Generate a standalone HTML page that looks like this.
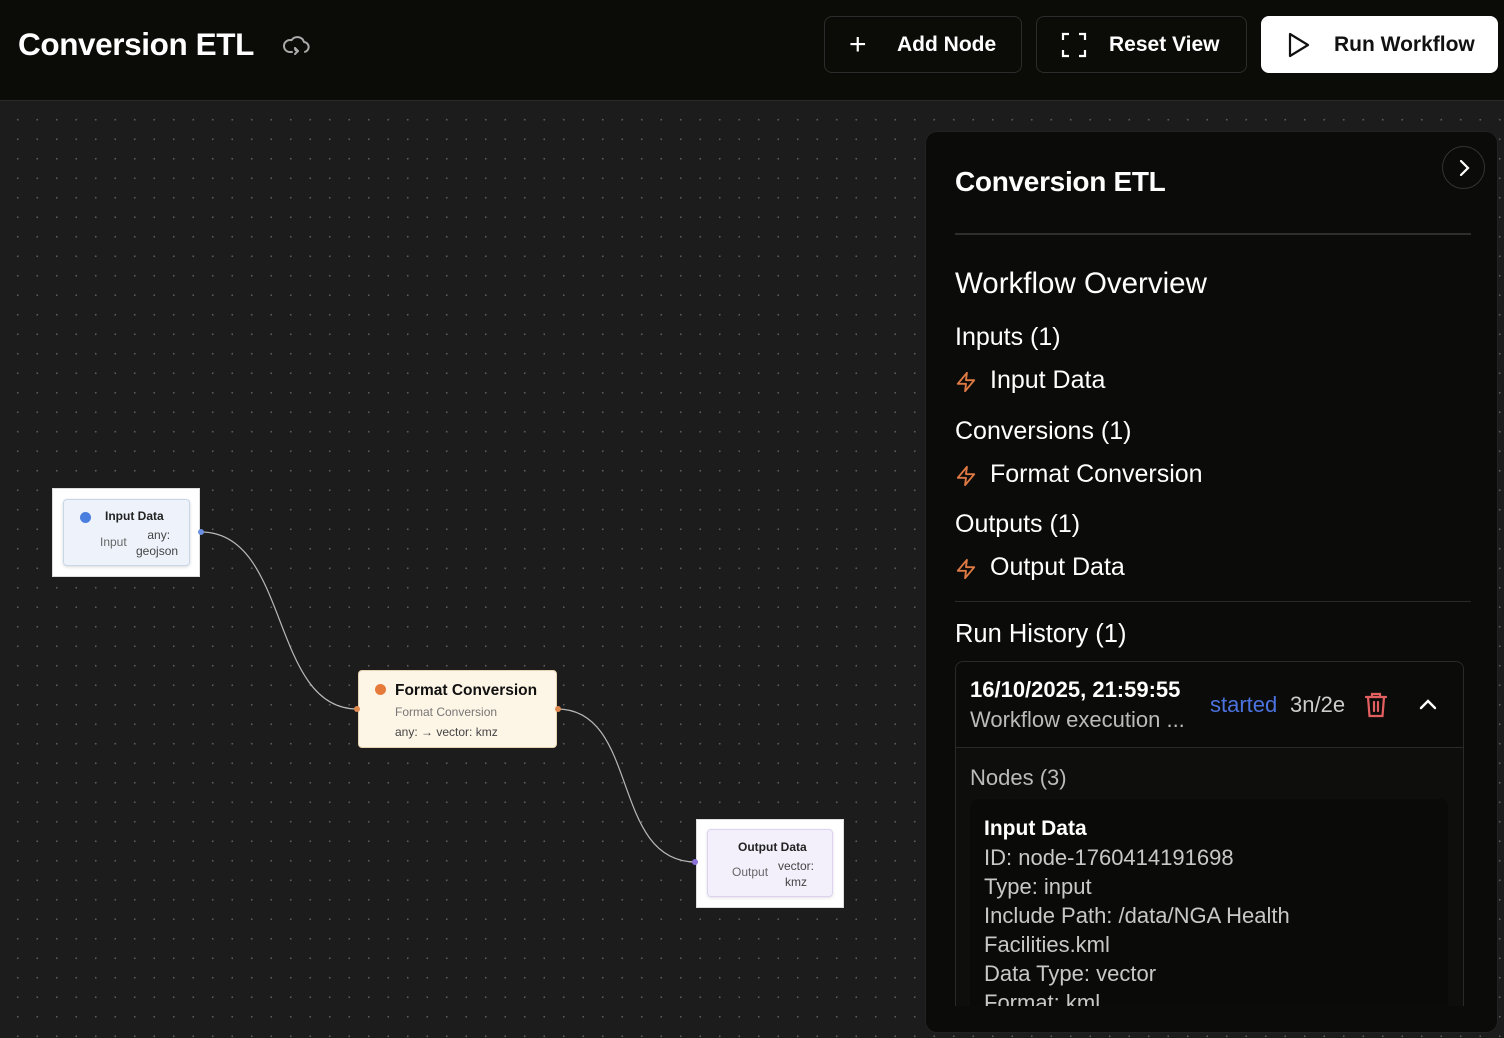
<!DOCTYPE html>
<html><head><meta charset="utf-8"><style>
*{margin:0;padding:0;box-sizing:border-box}
body{width:1504px;height:1038px;overflow:hidden;background:#1c1c1c;font-family:"Liberation Sans",sans-serif;position:relative;color:#fff}
.hdr{position:absolute;left:0;top:0;width:1504px;height:101px;background:#0b0b08;border-bottom:1px solid #2a2a2a}
.canvas{position:absolute;left:0;top:102px;width:1504px;height:936px;background-color:#1c1c1c;background-image:radial-gradient(circle,#5a5a5a 0.8px,transparent 1.1px);background-size:19.5px 19.5px;background-position:8px 8px}
.a{position:absolute;white-space:nowrap}
.btn{position:absolute;top:16px;height:57px;border:1px solid #2c2c2c;border-radius:8px;background:#0b0b08;font-size:21px;font-weight:bold;display:flex;align-items:center}
.panel{position:absolute;left:925px;top:131px;width:573px;height:902px;background:#0b0b09;border-radius:12px;border:1px solid #222;overflow:hidden}
</style></head><body>
<div class="hdr">
 <div class="a" style="left:18px;top:26px;font-size:31.5px;font-weight:bold;letter-spacing:-0.4px">Conversion ETL</div>
 <svg class="a" style="left:283px;top:33px" width="28" height="24" viewBox="0 0 28 24" fill="none" stroke="#aaa" stroke-width="2" stroke-linecap="round" stroke-linejoin="round"><path d="M9 19H7a6 6 0 1 1 1.5-11.8A7 7 0 0 1 21 9a5 5 0 0 1 1 9.8"/><path d="M12 15l3 3-3 3"/><path d="M15 18c-2 0-3-1-3-3"/></svg>
 <div class="btn" style="left:824px;width:198px"><span style="margin-left:24px;font-size:30px;font-weight:normal;width:26px">+</span><span style="margin-left:22px">Add Node</span></div>
 <div class="btn" style="left:1036px;width:211px"><svg style="margin-left:24px" width="26" height="26" viewBox="0 0 26 26" fill="none" stroke="#fff" stroke-width="2.2"><path d="M2 8V2h6M18 2h6v6M24 18v6h-6M8 24H2v-6"/></svg><span style="margin-left:22px">Reset View</span></div>
 <div class="btn" style="left:1261px;width:237px;background:#fff;color:#111;border-color:#fff"><svg style="margin-left:24px" width="26" height="28" viewBox="0 0 26 28" fill="none" stroke="#111" stroke-width="2.2" stroke-linejoin="round"><path d="M4 3l18 11-18 11z"/></svg><span style="margin-left:22px">Run Workflow</span></div>
</div>
<div class="canvas"></div>
<svg class="a" style="left:0;top:0" width="920" height="1038" fill="none" stroke="#b8b8b8" stroke-width="1.2"><path d="M201 532C290 532,270 709,357 709"/><path d="M557 709C640 709,610 862,696 862"/></svg>
<div class="a" style="left:52px;top:488px;width:148px;height:89px;background:#fff;border:1px solid #ddd"></div>
<div class="a" style="left:63px;top:499px;width:127px;height:67px;background:#eef3fb;border:1px solid #c8d6ea;border-radius:4px;box-shadow:0 1px 3px rgba(0,0,0,.15)"></div>
<div class="a" style="left:80px;top:512px;width:11px;height:11px;border-radius:50%;background:#4a7fe0"></div>
<div class="a" style="left:105px;top:509px;font-size:12px;font-weight:bold;color:#222">Input Data</div>
<div class="a" style="left:100px;top:535px;font-size:12px;color:#666">Input</div>
<div class="a" style="left:136px;top:527px;font-size:12px;color:#444;text-align:center;line-height:16px">&nbsp;any:<br>geojson</div>
<div class="a" style="left:198px;top:529px;width:6px;height:6px;border-radius:50%;background:#6b8fe0"></div>
<div class="a" style="left:358px;top:670px;width:199px;height:78px;background:#fdf5e6;border:1px solid #e8d3b0;border-radius:4px"></div>
<div class="a" style="left:375px;top:684px;width:11px;height:11px;border-radius:50%;background:#e57a3a"></div>
<div class="a" style="left:395px;top:682px;font-size:15.5px;font-weight:bold;color:#111">Format Conversion</div>
<div class="a" style="left:395px;top:705px;font-size:12px;color:#777">Format Conversion</div>
<div class="a" style="left:395px;top:725px;font-size:12px;color:#444">any: → vector: kmz</div>
<div class="a" style="left:354px;top:706px;width:6px;height:6px;border-radius:50%;background:#e08a50"></div>
<div class="a" style="left:555px;top:706px;width:6px;height:6px;border-radius:50%;background:#e08a50"></div>
<div class="a" style="left:696px;top:819px;width:148px;height:89px;background:#fff;border:1px solid #ddd"></div>
<div class="a" style="left:707px;top:829px;width:126px;height:68px;background:#f3f0fb;border:1px solid #ddd3f0;border-radius:4px;box-shadow:0 1px 3px rgba(0,0,0,.12)"></div>
<div class="a" style="left:738px;top:840px;font-size:12px;font-weight:bold;color:#222">Output Data</div>
<div class="a" style="left:732px;top:865px;font-size:12px;color:#666">Output</div>
<div class="a" style="left:778px;top:858px;font-size:12px;color:#444;text-align:center;line-height:16px">vector:<br>kmz</div>
<div class="a" style="left:692px;top:859px;width:6px;height:6px;border-radius:50%;background:#8a70d8"></div>
<div class="panel">
 <div class="a" style="left:29px;top:34px;font-size:28px;font-weight:bold;letter-spacing:-0.3px">Conversion ETL</div>
 <div class="a" style="left:516px;top:14px;width:43px;height:43px;border:1px solid #333;border-radius:50%"></div>
 <svg class="a" style="left:530px;top:26px" width="16" height="20" viewBox="0 0 16 20" fill="none" stroke="#fff" stroke-width="2.2" stroke-linecap="round"><path d="M5 3l7 7-7 7"/></svg>
 <div class="a" style="left:29px;top:101px;width:516px;height:2px;background:#2e2e2e"></div>
 <div class="a" style="left:29px;top:135px;font-size:29.5px">Workflow Overview</div>
 <div class="a" style="left:29px;top:191px;font-size:25px">Inputs (1)</div>
 <div class="a" style="left:64px;top:234px;font-size:25px">Input Data</div>
 <div class="a" style="left:29px;top:285px;font-size:25px">Conversions (1)</div>
 <div class="a" style="left:64px;top:328px;font-size:25px">Format Conversion</div>
 <div class="a" style="left:29px;top:378px;font-size:25px">Outputs (1)</div>
 <div class="a" style="left:64px;top:421px;font-size:25px">Output Data</div>
 <svg class="a" style="left:29px;top:238px" width="22" height="24" viewBox="0 0 24 24" fill="none" stroke="#e07a45" stroke-width="2" stroke-linejoin="round"><path d="M13 2L3 14h9l-1 8 10-12h-9z"/></svg>
 <svg class="a" style="left:29px;top:332px" width="22" height="24" viewBox="0 0 24 24" fill="none" stroke="#e07a45" stroke-width="2" stroke-linejoin="round"><path d="M13 2L3 14h9l-1 8 10-12h-9z"/></svg>
 <svg class="a" style="left:29px;top:425px" width="22" height="24" viewBox="0 0 24 24" fill="none" stroke="#e07a45" stroke-width="2" stroke-linejoin="round"><path d="M13 2L3 14h9l-1 8 10-12h-9z"/></svg>
 <div class="a" style="left:29px;top:469px;width:516px;height:1px;background:#2a2a2a"></div>
 <div class="a" style="left:29px;top:488px;font-size:25.5px">Run History (1)</div>
 <div class="a" style="left:29px;top:529px;width:509px;height:380px;border:1px solid #2a2a2a;border-radius:8px;background:#0e0e0c"></div>
 <div class="a" style="left:30px;top:530px;width:507px;height:86px;background:#0b0b09;border-bottom:1px solid #2a2a2a;border-radius:8px 8px 0 0"></div>
 <div class="a" style="left:44px;top:545px;font-size:22px;font-weight:bold">16/10/2025, 21:59:55</div>
 <div class="a" style="left:44px;top:575px;font-size:22px;color:#bbb">Workflow execution ...</div>
 <div class="a" style="left:284px;top:560px;font-size:22px;color:#4b73e0">started</div>
 <div class="a" style="left:364px;top:560px;font-size:22px;color:#ccc">3n/2e</div>
 <svg class="a" style="left:438px;top:559px" width="24" height="28" viewBox="0 0 24 28" fill="none" stroke="#e46060" stroke-width="2.2" stroke-linecap="round"><path d="M2 6h20M8 6V3h8v3M4 6l1.5 19h13L20 6M10 11v9M14 11v9"/></svg>
 <svg class="a" style="left:492px;top:565px" width="20" height="14" viewBox="0 0 20 14" fill="none" stroke="#fff" stroke-width="2.4" stroke-linecap="round"><path d="M3 11l7-7 7 7"/></svg>
 <div class="a" style="left:44px;top:633px;font-size:22px;color:#bbb">Nodes (3)</div>
 <div class="a" style="left:44px;top:667px;width:478px;height:240px;background:#0a0a08;border-radius:8px"></div>
 <div class="a" style="left:58px;top:682px;font-size:22px;line-height:29px;color:#c8c8c8">
  <div style="color:#fff;font-weight:bold;font-size:21px">Input Data</div>
  <div>ID: node-1760414191698</div><div>Type: input</div><div>Include Path: /data/NGA Health</div><div>Facilities.kml</div><div>Data Type: vector</div><div>Format: kml</div>
 </div>
 <div class="a" style="left:0;top:874px;width:573px;height:30px;background:#0b0b09"></div>
</div>
</body></html>
